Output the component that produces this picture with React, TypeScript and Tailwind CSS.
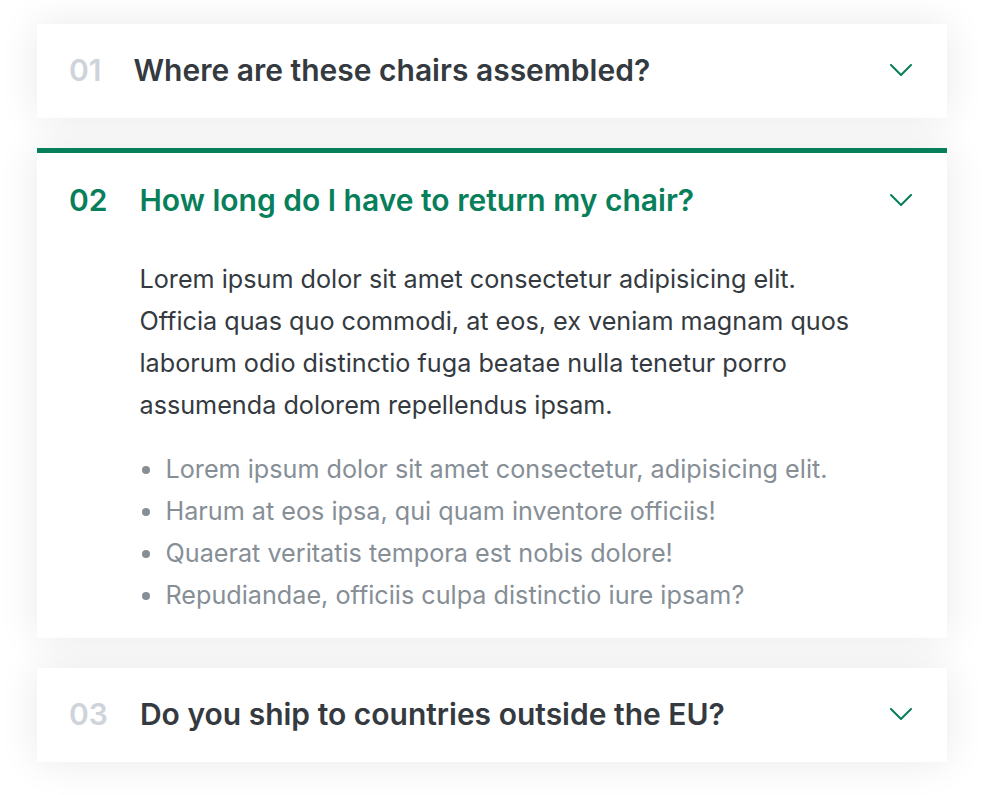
import { useState } from 'react'

const faqs = [
  {
    title: 'Where are these chairs assembled?',
    text: 'Lorem ipsum dolor sit amet consectetur adipisicing elit. Officia quas quo commodi, at eos, ex veniam magnam quos laborum odio distinctio fuga beatae nulla tenetur porro assumenda dolorem repellendus ipsam.',
  },
  {
    title: 'How long do I have to return my chair?',
    text: 'Lorem ipsum dolor sit amet consectetur adipisicing elit. Officia quas quo commodi, at eos, ex veniam magnam quos laborum odio distinctio fuga beatae nulla tenetur porro assumenda dolorem repellendus ipsam.',
  },
  {
    title: 'Do you ship to countries outside the EU?',
    text: 'Lorem ipsum dolor sit amet consectetur adipisicing elit. Officia quas quo commodi, at eos, ex veniam magnam quos laborum odio distinctio fuga beatae nulla tenetur porro assumenda dolorem repellendus ipsam.',
  },
]

const bullets = [
  'Lorem ipsum dolor sit amet consectetur, adipisicing elit.',
  'Harum at eos ipsa, qui quam inventore officiis!',
  'Quaerat veritatis tempora est nobis dolore!',
  'Repudiandae, officiis culpa distinctio iure ipsam?',
]

const Chevron = () => (
  <svg width="22" height="12" viewBox="0 0 22 12" fill="none" className="stroke-[#087f5b]">
    <polyline points="1,1 11,11 21,1" strokeWidth="2" strokeLinecap="round" strokeLinejoin="round" />
  </svg>
)

const Item = ({ num, title, text, open, onToggle }: { num: number; title: string; text: string; open: boolean; onToggle: () => void }) => {
  return (
    <div
      onClick={onToggle}
      className={`grid cursor-pointer grid-cols-[auto_1fr_auto] items-center gap-x-8 bg-white pl-8 pr-[35px] shadow-[0_0_40px_rgba(0,0,0,0.09)] border-y-[5px] border-b-white ${
        open ? 'border-t-[#087f5b] pt-8 pb-[17px]' : 'border-t-white pt-[26px] pb-[28px]'
      }`}
    >
      <p className={`text-[30px] leading-[30px] font-semibold ${open ? 'text-[#087f5b]' : 'text-[#ced4da]'}`}>
        {num < 10 ? `0${num}` : num}
      </p>
      <p className={`text-[30px] leading-[30px] font-semibold ${open ? 'text-[#087f5b]' : 'text-[#343a40]'}`}>{title}</p>
      <Chevron />
      {open && (
        <div className="col-start-2 col-end-[-1] mt-[43px] max-w-[725px]">
          <p className="text-[25.2px] leading-[42px] text-[#343a40] mb-[22px]">{text}</p>
          <ul className="ml-[26px] list-disc text-[25.2px] leading-[42px] text-[#868e96] marker:text-[#868e96]">
            {bullets.map((b) => (
              <li key={b}>{b}</li>
            ))}
          </ul>
        </div>
      )}
    </div>
  )
}

export default function App() {
  const [openId, setOpenId] = useState<number | null>(1)

  return (
    <div className="min-h-[795px] bg-white pt-6 font-['Inter',sans-serif]">
      <div className="ml-[37px] flex w-[910px] flex-col gap-[30px]">
        {faqs.map((f, i) => (
          <Item
            key={f.title}
            num={i + 1}
            title={f.title}
            text={f.text}
            open={openId === i}
            onToggle={() => setOpenId(openId === i ? null : i)}
          />
        ))}
      </div>
    </div>
  )
}
